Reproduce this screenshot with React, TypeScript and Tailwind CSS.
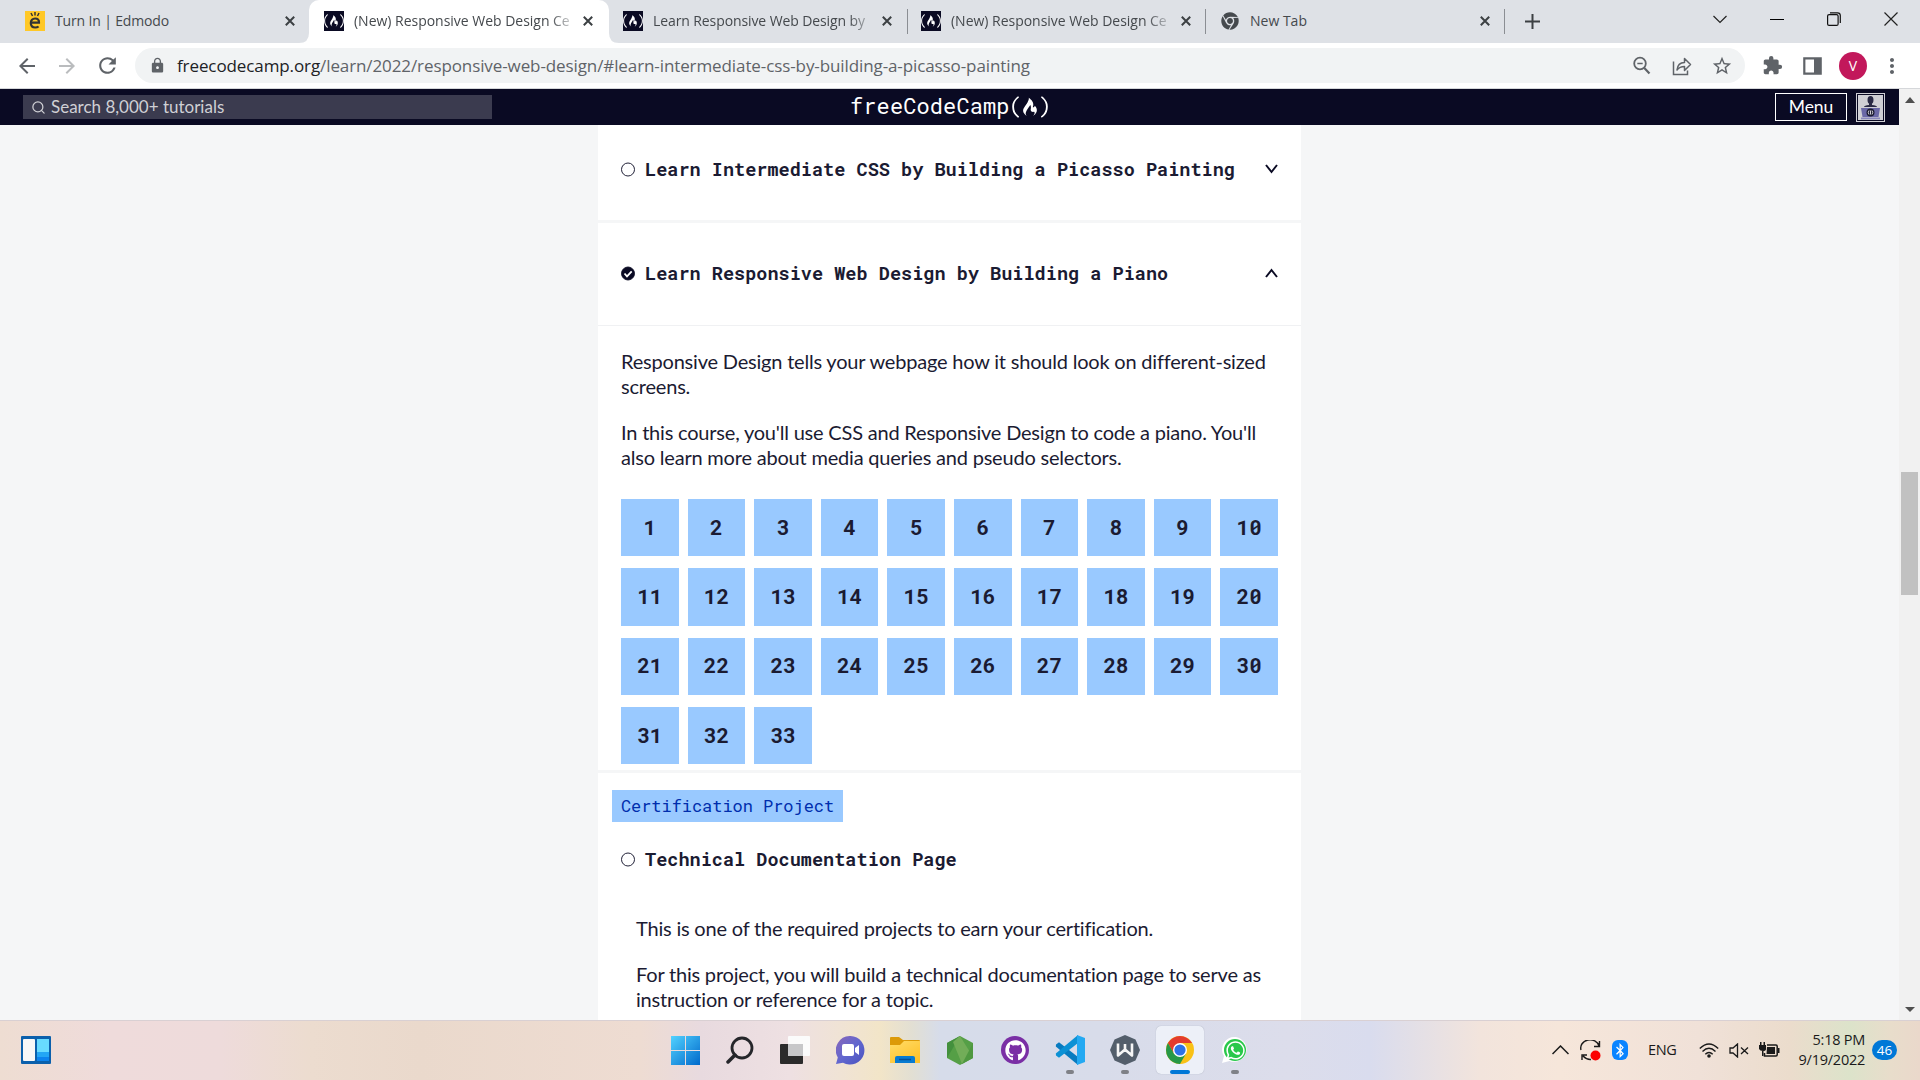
import type { ReactNode } from 'react';
import { FaFreeCodeCamp, FaChrome, FaGithub, FaWhatsapp, FaBluetoothB } from 'react-icons/fa';
import { MdExtension, MdLock, MdStarBorder, MdRefresh, MdArrowBack, MdArrowForward, MdMoreVert } from 'react-icons/md';
import { Search } from 'lucide-react';

const Close = () => (
  <svg className="h-[10px] w-[10px] shrink-0" viewBox="0 0 10 10" stroke="#3c4043" strokeWidth="2">
    <path d="M.8.8l8.4 8.4M9.2.8L.8 9.2" />
  </svg>
);

const FccIcon = () => (
  <div className="flex h-5 w-5 shrink-0 items-center justify-center bg-[#0a0a23]">
    <FaFreeCodeCamp className="h-[18px] w-[20px] text-white" />
  </div>
);

const EdmodoIcon = () => (
  <svg className="h-5 w-5 shrink-0" viewBox="0 0 20 20">
    <rect width="20" height="20" fill="#ffc827" />
    <path d="M6 11.7h8c.3-3-1.500-4.200-3.900-4.200-2.600 0-4.300 1.700-4.300 4.500s1.800 4.500 4.500 4.500c1.300 0 2.400-.3 3.300-1" fill="none" stroke="#333" strokeWidth="2.200" />
    <path d="M6 2l1.500 3M10 1v3.500M14 2l-1.500 3" stroke="#333" strokeWidth="1.500" />
  </svg>
);

type TabProps = { icon: ReactNode; title: string; fade?: boolean; className: string; textClass: string };
const Tab = ({ icon, title, fade, className, textClass }: TabProps) => (
  <div className={`flex h-[43px] shrink-0 items-center pb-px ${className}`}>
    {icon}
    <span className={`ml-[10px] flex-1 pb-[2px] whitespace-nowrap ${textClass} ${fade ? '[mask-image:linear-gradient(to_right,black_196px,transparent_224px)]' : ''}`}>
      {title}
    </span>
    <Close />
  </div>
);

const TabStrip = () => (
  <div className="flex h-[43px] items-center bg-[#dee1e6] font-['Open_Sans',sans-serif] text-[14px] text-[#45494d]">
    <Tab icon={<EdmodoIcon />} title="Turn In | Edmodo" className="w-[309px] pr-[14px] pl-[25px]" textClass="tracking-[-0.15px]" />
    <div className="relative h-[43px] w-[300px] shrink-0 rounded-t-[10px] bg-white">
      <Tab icon={<FccIcon />} title="(New) Responsive Web Design Ce" fade className="w-[300px] pr-[16px] pl-[15px]" textClass="tracking-[-0.02px]" />
      <svg className="absolute bottom-0 -left-[10px] h-[10px] w-[10px]" viewBox="0 0 10 10"><path d="M10 0v10H0Q10 10 10 0" fill="#fff" /></svg>
      <svg className="absolute -right-[10px] bottom-0 h-[10px] w-[10px]" viewBox="0 0 10 10"><path d="M0 0v10h10Q0 10 0 0" fill="#fff" /></svg>
    </div>
    <Tab icon={<FccIcon />} title="Learn Responsive Web Design by" fade className="w-[298px] pr-[15px] pl-[14px]" textClass="tracking-[-0.1px]" />
    <div className="h-[25px] w-px bg-[#8b8e93]" />
    <Tab icon={<FccIcon />} title="(New) Responsive Web Design Ce" fade className="w-[297px] pr-[14px] pl-[13px]" textClass="tracking-[-0.02px]" />
    <div className="h-[25px] w-px bg-[#8b8e93]" />
    <Tab icon={<FaChrome className="h-[18px] w-[18px] shrink-0 text-[#45494d]" />} title="New Tab" className="w-[298px] pr-[14px] pl-[15px]" textClass="pl-px" />
    <div className="h-[25px] w-px bg-[#8b8e93]" />
    <svg className="ml-[20px] h-[15px] w-[15px]" viewBox="0 0 15 15" stroke="#3c4043" strokeWidth="2"><path d="M7.500 0v15M0 7.500h15" /></svg>
    <svg className="mb-[6px] ml-auto h-[14px] w-[14px]" viewBox="0 0 14 14" fill="none" stroke="#222" strokeWidth="1.200"><path d="M.5 4L7 10.500 13.500 4" /></svg>
    <svg className="mb-[6px] ml-[43px] h-[14px] w-[14px]" viewBox="0 0 14 14" stroke="#000"><path d="M0 7.500h14" /></svg>
    <svg className="mb-[6px] ml-[43px] h-[14px] w-[14px]" viewBox="0 0 14 14" fill="none" stroke="#111" strokeWidth="1.200"><rect x=".6" y="2.600" width="10.500" height="10.800" rx="1.500" /><path d="M3 .8h7.500q2.800 0 2.800 2.800V11" /></svg>
    <svg className="mr-[22px] mb-[6px] ml-[43px] h-[14px] w-[14px]" viewBox="0 0 14 14" stroke="#222" strokeWidth="1.200"><path d="M.5.5l13 13M13.500.5L.5 13.500" /></svg>
  </div>
);

const AddressBar = () => (
  <div className="flex h-[46px] items-center border-b border-[#d5d7da] bg-white text-[#5f6368]">
    <MdArrowBack className="ml-[15px] h-6 w-6" />
    <MdArrowForward className="ml-[16px] h-6 w-6 text-[#babcbe]" />
    <MdRefresh className="ml-[16px] h-[25px] w-[25px]" />
    <div className="ml-[15px] flex h-[35px] w-[1610px] items-center rounded-full bg-[#f1f3f4] pr-[12px] pl-[14px]">
      <MdLock className="h-[17px] w-[17px]" />
      <span className="ml-[11px] flex-1 font-['Open_Sans',sans-serif] text-[17px] tracking-[-0.1px] whitespace-nowrap">
        <span className="text-[#202124]">freecodecamp.org</span>/learn/2022/responsive-web-design/#learn-intermediate-css-by-building-a-picasso-painting
      </span>
      <svg className="h-5 w-5" viewBox="0 0 20 20" fill="none" stroke="currentColor" strokeWidth="1.800"><circle cx="8" cy="7.500" r="5.800" /><path d="M12.300 12l5.200 5.500" strokeWidth="2.200" /><path d="M5.300 7.500h5.400" strokeWidth="1.500" /></svg>
      <svg className="ml-[20px] h-5 w-5" viewBox="0 0 20 20" fill="none" stroke="currentColor" strokeWidth="1.500"><path d="M1.500 5.500v13h14v-4" /><path d="M5 14c.5-5 3.500-7.500 7.500-7.500V2.500l6 6-6 6v-4C9 10.500 6.500 12 5 14z" strokeLinejoin="round" /></svg>
      <MdStarBorder className="ml-[19px] h-[22px] w-[22px]" />
    </div>
    <MdExtension className="ml-[17px] h-[21px] w-[21px]" />
    <svg className="ml-[20px] h-[18px] w-[19px]" viewBox="0 0 19 18"><path d="M1.300 1.300h16.400v15.400H1.300z" fill="none" stroke="currentColor" strokeWidth="2.200" /><path d="M11 1h7v16h-7z" fill="currentColor" /></svg>
    <div className="ml-[17px] flex h-7 w-7 items-center justify-center rounded-full bg-[#c2185b] font-['Open_Sans',sans-serif] text-[14px] text-white">V</div>
    <MdMoreVert className="ml-[13px] h-6 w-6" />
  </div>
);

const Navbar = () => (
  <header className="flex h-[36px] w-full items-center bg-[#0a0a23] pr-[14px] pl-[23px]">
    <div className="flex h-6 w-[469px] items-center bg-[#3b3b4f] pl-[8px] text-[#d0d0d5]">
      <Search className="h-[15px] w-[15px]" strokeWidth={2} />
      <span className="ml-[5px] text-[17px] leading-6">Search 8,000+ tutorials</span>
    </div>
    <div className="ml-[358px] flex items-center pb-[2px] font-['Roboto_Mono','DejaVu_Sans_Mono',monospace] text-[22px] text-white">
      <span className="leading-6 tracking-[0.1px]">freeCodeCamp</span>
      <FaFreeCodeCamp className="mt-px ml-[2px] h-[28px] w-[36px]" preserveAspectRatio="none" />
    </div>
    <div className="ml-auto flex items-center gap-[9px]">
      <div className="flex h-[28px] w-[72px] items-center justify-center border border-white text-[17.5px] tracking-[-0.1px] text-white">Menu</div>
      <div className="flex h-[29px] w-[29px] items-center justify-center border border-[#d0d0d5] p-px">
        <svg className="h-[25px] w-[25px]" viewBox="0 0 25 25">
          <rect width="25" height="25" fill="#d0d0d5" />
          <ellipse cx="12.500" cy="5" rx="3" ry="4" fill="#2a2a45" />
          <path d="M11 8h3v2c3 .5 5 .5 5 2H6c0-1.500 2-1.500 5-2z" fill="#2a2a45" />
          <path d="M3 13h19l-1.500 9h-16z" fill="#6a68a6" /><path d="M3 22.500h19v1.800H3z" fill="#8a89bd" />
          <circle cx="12.500" cy="17.500" r="4" fill="#1b1b32" /><path d="M11 15.500q-1.500 2 0 4M14 15.500q1.500 2 0 4M12.500 15.500v4" stroke="#fff" strokeWidth=".8" fill="none" />
        </svg>
      </div>
    </div>
  </header>
);

const Status = ({ done }: { done?: boolean }) => (
  <svg className="h-[15px] w-[14px] shrink-0" viewBox="0 0 14 15">
    <circle cx="7" cy="7.500" r="6.500" fill={done ? '#0a0a23' : 'none'} stroke="#0a0a23" strokeWidth=".9" />
    {done && <path d="M3.500 7.500l2.500 2.800 4.700-5" stroke="#fff" strokeWidth="1.800" fill="none" />}
  </svg>
);

const Caret = ({ up }: { up?: boolean }) => (
  <svg className="ml-auto h-[10px] w-[13px]" viewBox="0 0 13 10" fill="none" stroke="#0a0a23" strokeWidth="2">
    <path d={up ? 'M1 9l5.500-7L12 9' : 'M1 1l5.500 7L12 1'} />
  </svg>
);

const Title = ({ children }: { children: ReactNode }) => (
  <h3 className="ml-[10px] font-['Roboto_Mono','DejaVu_Sans_Mono',monospace] text-[18.5px] leading-6 font-bold tracking-[0.03px] whitespace-nowrap">{children}</h3>
);

const steps = Array.from({ length: 33 }, (_, i) => i + 1);

const Curriculum = () => (
  <main className="mx-auto h-[895px] w-[703px] overflow-hidden bg-white text-[20px] leading-[25px] tracking-[-0.2px] text-[#1b1b32]">
    <div className="flex h-[98px] items-start border-b-[3px] border-[#f5f6f7] px-[23px]">
      <div className="flex h-[88px] w-full items-center"><Status /><Title>Learn Intermediate CSS by Building a Picasso Painting</Title><Caret /></div>
    </div>
    <div className="flex h-[103px] items-center border-b border-[#f0f1f3] px-[23px] pb-[2px]">
      <Status done /><Title>Learn Responsive Web Design by Building a Piano</Title><Caret up />
    </div>
    <div className="h-[447px] border-b-[3px] border-[#f5f6f7] px-[23px] pt-[23px]">
      <p className="whitespace-nowrap">Responsive Design tells your webpage how it should look on different-sized<br />screens.</p>
      <p className="mt-[21px] whitespace-nowrap">In this course, you'll use CSS and Responsive Design to code a piano. You'll<br />also learn more about media queries and pseudo selectors.</p>
      <div className="mt-[29px] grid grid-cols-10 gap-x-[9px] gap-y-[12.1px]">
        {steps.map((n) => (
          <div key={n} className="flex h-[57.3px] items-center justify-center bg-[#99c9ff] pb-px font-['Roboto_Mono','DejaVu_Sans_Mono',monospace] text-[21px] font-bold tracking-normal">{n}</div>
        ))}
      </div>
    </div>
    <div className="pt-[17px]">
      <div className="ml-[14px] flex h-8 w-[231px] items-center justify-center bg-[#99c9ff] pb-px font-['Roboto_Mono','DejaVu_Sans_Mono',monospace] text-[17px] tracking-[-0.05px] whitespace-nowrap text-[#002ead]">Certification Project</div>
      <div className="mt-[25px] flex items-center px-[23px]"><Status /><Title>Technical Documentation Page</Title></div>
      <p className="mt-[45px] ml-[38px] whitespace-nowrap">This is one of the required projects to earn your certification.</p>
      <p className="mt-[21px] ml-[38px] whitespace-nowrap">For this project, you will build a technical documentation page to serve as<br />instruction or reference for a topic.</p>
    </div>
  </main>
);

const Scrollbar = () => (
  <div className="flex w-[21px] flex-col items-center bg-[#f1f1f1]">
    <svg className="mt-[8px] h-[6px] w-[10px]" viewBox="0 0 10 6"><path d="M5 0l5 6H0z" fill="#505050" /></svg>
    <div className="mt-[369px] h-[123px] w-[17px] bg-[#c1c1c1]" />
    <svg className="mt-auto mb-[8px] h-[5px] w-[10px]" viewBox="0 0 10 5"><path d="M0 0h10L5 5z" fill="#505050" /></svg>
  </div>
);

const Slot = ({ children, bar }: { children: ReactNode; bar?: 'idle' | 'active' }) => (
  <div className={`relative flex h-12 w-12 items-center justify-center rounded-[5px] ${bar === 'active' ? 'bg-[#edf0f8] shadow-[0_0_1px_#9aa0b0]' : ''}`}>
    {children}
    {bar === 'idle' && <div className="absolute bottom-0 h-1 w-2 rounded-full bg-[#7f8187]" />}
    {bar === 'active' && <div className="absolute bottom-0 h-1 w-5 rounded-full bg-[#0078d7]" />}
  </div>
);

const Taskbar = () => (
  <footer className="flex h-[60px] items-center border-t border-[#d9d0d3] bg-[linear-gradient(90deg,#eeddd2_0px,#efdbdb_110px,#eedbdb_220px,#ecdccf_310px,#ead9cc_420px,#eedcd2_640px,#e8dadf_700px,#eee0e2_790px,#f0e3d5_840px,#f2e5c8_880px,#e2dfd3_912px,#d6dcea_940px,#d8dcea_1100px,#dcddeb_1290px,#d9dcee_1370px,#f2e4dc_1480px,#f6e6da_1560px,#f0e1d8_1700px,#ebdccc_1790px,#dce3ca_1850px,#e8ddcb_1890px,#ead8cb_1920px)] pb-px font-['Open_Sans',sans-serif] text-[#1a1a1a]">
    <svg className="ml-[21px] h-[28px] w-[30px]" viewBox="0 0 30 28">
      <rect width="30" height="28" rx="1" fill="#0b60ac" /><rect x="2" y="3" width="12" height="22" rx="1" fill="#f7f7f7" />
      <path d="M16 3h12v13H16z" fill="#68dbff" /><path d="M16 16h12v5H16z" fill="#23a6f5" /><path d="M16 21h12v4H16z" fill="#0c83ee" />
    </svg>
    <div className="ml-[610px] flex gap-[7px]">
      <Slot>
        <svg className="h-[29px] w-[29px]" viewBox="0 0 29 29"><defs><linearGradient id="win" x2="1" y2="1"><stop stopColor="#52d2ff" /><stop offset="1" stopColor="#0069cb" /></linearGradient></defs><path d="M0 0h14v14H0zM15 0h14v14H15zM0 15h14v14H0zM15 15h14v14H15z" fill="url(#win)" /></svg>
      </Slot>
      <Slot>
        <svg className="h-[28px] w-[28px]" viewBox="0 0 28 28" fill="none" stroke="#25262a" strokeWidth="2.800"><circle cx="16" cy="12" r="10" /><path d="M9 19l-7 7" strokeWidth="3.500" strokeLinecap="round" /></svg>
      </Slot>
      <Slot>
        <svg className="h-[28px] w-[30px]" viewBox="0 0 30 28"><rect y="8" width="23" height="20" rx="1" fill="#2b2b2b" /><rect x="8" width="22" height="20" rx="1" fill="#fbfbfb" /><path d="M8 8h15v12H8z" fill="#c7c7c9" /></svg>
      </Slot>
      <Slot>
        <svg className="h-[29px] w-[29px]" viewBox="0 0 29 29"><defs><linearGradient id="chat" x2="1" y2="1"><stop stopColor="#8a66b8" /><stop offset=".5" stopColor="#6267cf" /><stop offset="1" stopColor="#4952bf" /></linearGradient></defs><path d="M14.500 0A14.300 14.300 0 1 1 7 26.700L0 28l1.800-6.500A14.300 14.300 0 0 1 14.500 0z" fill="url(#chat)" /><rect x="6" y="8" width="12" height="12" rx="2" fill="#fff" /><path d="M19 12l4-3v10l-4-3z" fill="#fff" /></svg>
      </Slot>
      <Slot>
        <svg className="h-[28px] w-[30px]" viewBox="0 0 30 28"><defs><linearGradient id="folder" x2=".7" y2="1"><stop stopColor="#ffdc68" /><stop offset="1" stopColor="#ffc22b" /></linearGradient></defs><path d="M0 9V2q0-1 1-1h8l4 3h16q1 0 1 1v7z" fill="#dc9a08" /><path d="M0 9h10l4-4h16v22H0z" fill="url(#folder)" /><path d="M5 27v-5q0-2 2-2h16q2 0 2 2v5z" fill="#087bd1" /><path d="M9 23.500h12" stroke="#075097" strokeWidth="1.500" /></svg>
      </Slot>
      <Slot>
        <svg className="h-[29px] w-[26px]" viewBox="0 0 26 29"><path d="M13 0l13 7v15l-13 7-13-7V7z" fill="#559f46" /><path d="M13 0L0 7v15z" fill="#43903d" /><path d="M13 0L6 6l9 22 11-7z" fill="#72ad58" /><path d="M26 7v15l-11 6z" fill="#4f9840" /></svg>
      </Slot>
      <Slot>
        <div className="flex h-7 w-7 items-center justify-center rounded-full bg-[#7a2fa5]">
          <FaGithub className="h-[21px] w-[21px] text-white" />
        </div>
      </Slot>
      <Slot bar="idle">
        <svg className="h-[30px] w-[30px]" viewBox="0 0 30 30"><path d="M1 9.500l3-2.200L23 22v8L.8 11.500z" fill="#087bc0" /><path d="M1 20.500l3 2.200L23 8V0L.8 18.500z" fill="#0c91d5" /><path d="M22 0l8 3v24l-8 3z" fill="#24a9f2" /></svg>
      </Slot>
      <Slot bar="idle">
        <svg className="h-[30px] w-[30px]" viewBox="0 0 30 30"><path d="M15 0l10.500 4.500L30 15l-4.500 10.500L15 30 4.500 25.500 0 15 4.500 4.500z" fill="#535e6b" /><path d="M8 8.500v12l7-6 7 6v-12M15 9v6" fill="none" stroke="#f5f5f5" strokeWidth="2.600" strokeLinejoin="round" /></svg>
      </Slot>
      <Slot bar="active">
        <svg className="h-[28px] w-[28px]" viewBox="0 0 28 28"><circle cx="14" cy="14" r="14" fill="#f9c116" /><path d="M1.900 7A14 14 0 0 1 26.100 7H14L7.900 17.500z" fill="#e33b2e" /><path d="M1.900 7A14 14 0 0 0 14 28l6.100-10.500H7.900z" fill="#279847" /><circle cx="14" cy="14" r="7" fill="#fff" /><circle cx="14" cy="14" r="5.600" fill="#2d72e6" /></svg>
      </Slot>
      <Slot bar="idle">
        <svg className="absolute h-[28px] w-[28px]" viewBox="0 0 28 28"><path d="M15 1A12.500 12.500 0 1 1 8.500 25L1 27l2-7A12.500 12.500 0 0 1 15 1z" fill="#fff" /></svg>
        <div className="relative flex h-[22px] w-[22px] items-center justify-center rounded-full bg-[#29c84b]"><FaWhatsapp className="h-[21px] w-[21px] text-white" /></div>
      </Slot>
    </div>
    <svg className="ml-[293px] h-[10px] w-[17px]" viewBox="0 0 17 10" fill="none" stroke="currentColor" strokeWidth="1.500"><path d="M.5 9l8-8 8 8" /></svg>
    <svg className="ml-[11px] h-[21px] w-[21px]" viewBox="0 0 21 21" fill="none" stroke="currentColor" strokeWidth="1.400"><path d="M1 10A9 8 0 0 1 19 6M19.500 1v5.500H14M2 20v-5h5M3 16q4 4 8 3.500" /><circle cx="15.500" cy="15.500" r="5" fill="#fb0000" stroke="none" /></svg>
    <div className="ml-[11px] flex h-5 w-4 items-center justify-center rounded-[6px] bg-[#0a84ff]"><FaBluetoothB className="h-[15px] text-white" /></div>
    <span className="ml-[20px] w-[29px] text-[14.5px] tracking-[-0.3px]">ENG</span>
    <svg className="ml-[22px] h-[15px] w-[20px]" viewBox="0 0 20 15" fill="none" stroke="currentColor" strokeWidth="1.400"><path d="M.8 5.500q9.200-9 18.400 0M3.500 8.500q6.500-6.300 13 0M6.300 11.300q3.700-3.500 7.400 0" /><circle cx="10" cy="13" r="1.800" fill="currentColor" stroke="none" /></svg>
    <svg className="ml-[10px] h-[15px] w-[20px]" viewBox="0 0 20 15" fill="none" stroke="currentColor" strokeWidth="1.300"><path d="M1 5h3l4.500-4v13L4 10H1zM12 4.500l7 6.500M19 4.500L12 11" /></svg>
    <svg className="ml-[10px] h-[16px] w-[21px]" viewBox="0 0 21 16" fill="none" stroke="currentColor" strokeWidth="1.500"><path d="M8 3h9q1.200 0 1.200 1.200v8.600q0 1.200-1.200 1.200H5.500v-3" /><path d="M19 6h1.500v5H19z" fill="currentColor" stroke="none" /><path d="M8 5h8v7H7.500zM0 3h7v4q0 2-3 2T0 7zM1 0h1.500v3H1zM4.500 0H6v3H4.500zM3 9h1.500v5H3z" fill="currentColor" stroke="none" /></svg>
    <div className="ml-[15px] w-[70px] text-right text-[14.5px] leading-[20px] tracking-[-0.25px] whitespace-nowrap">5:18 PM<br />9/19/2022</div>
    <div className="ml-[7px] flex h-5 w-[25px] items-center justify-center rounded-full bg-[#0078d7] text-[13.5px] text-white">46</div>
  </footer>
);

export default function App() {
  return (
    <div className="flex h-[1080px] w-[1920px] flex-col overflow-hidden">
      <TabStrip />
      <AddressBar />
      <div className="flex h-[931px] shrink-0">
        <div className="w-[1899px] overflow-hidden bg-[#f5f6f7] font-[Lato,sans-serif]">
          <Navbar />
          <Curriculum />
        </div>
        <Scrollbar />
      </div>
      <Taskbar />
    </div>
  );
}
